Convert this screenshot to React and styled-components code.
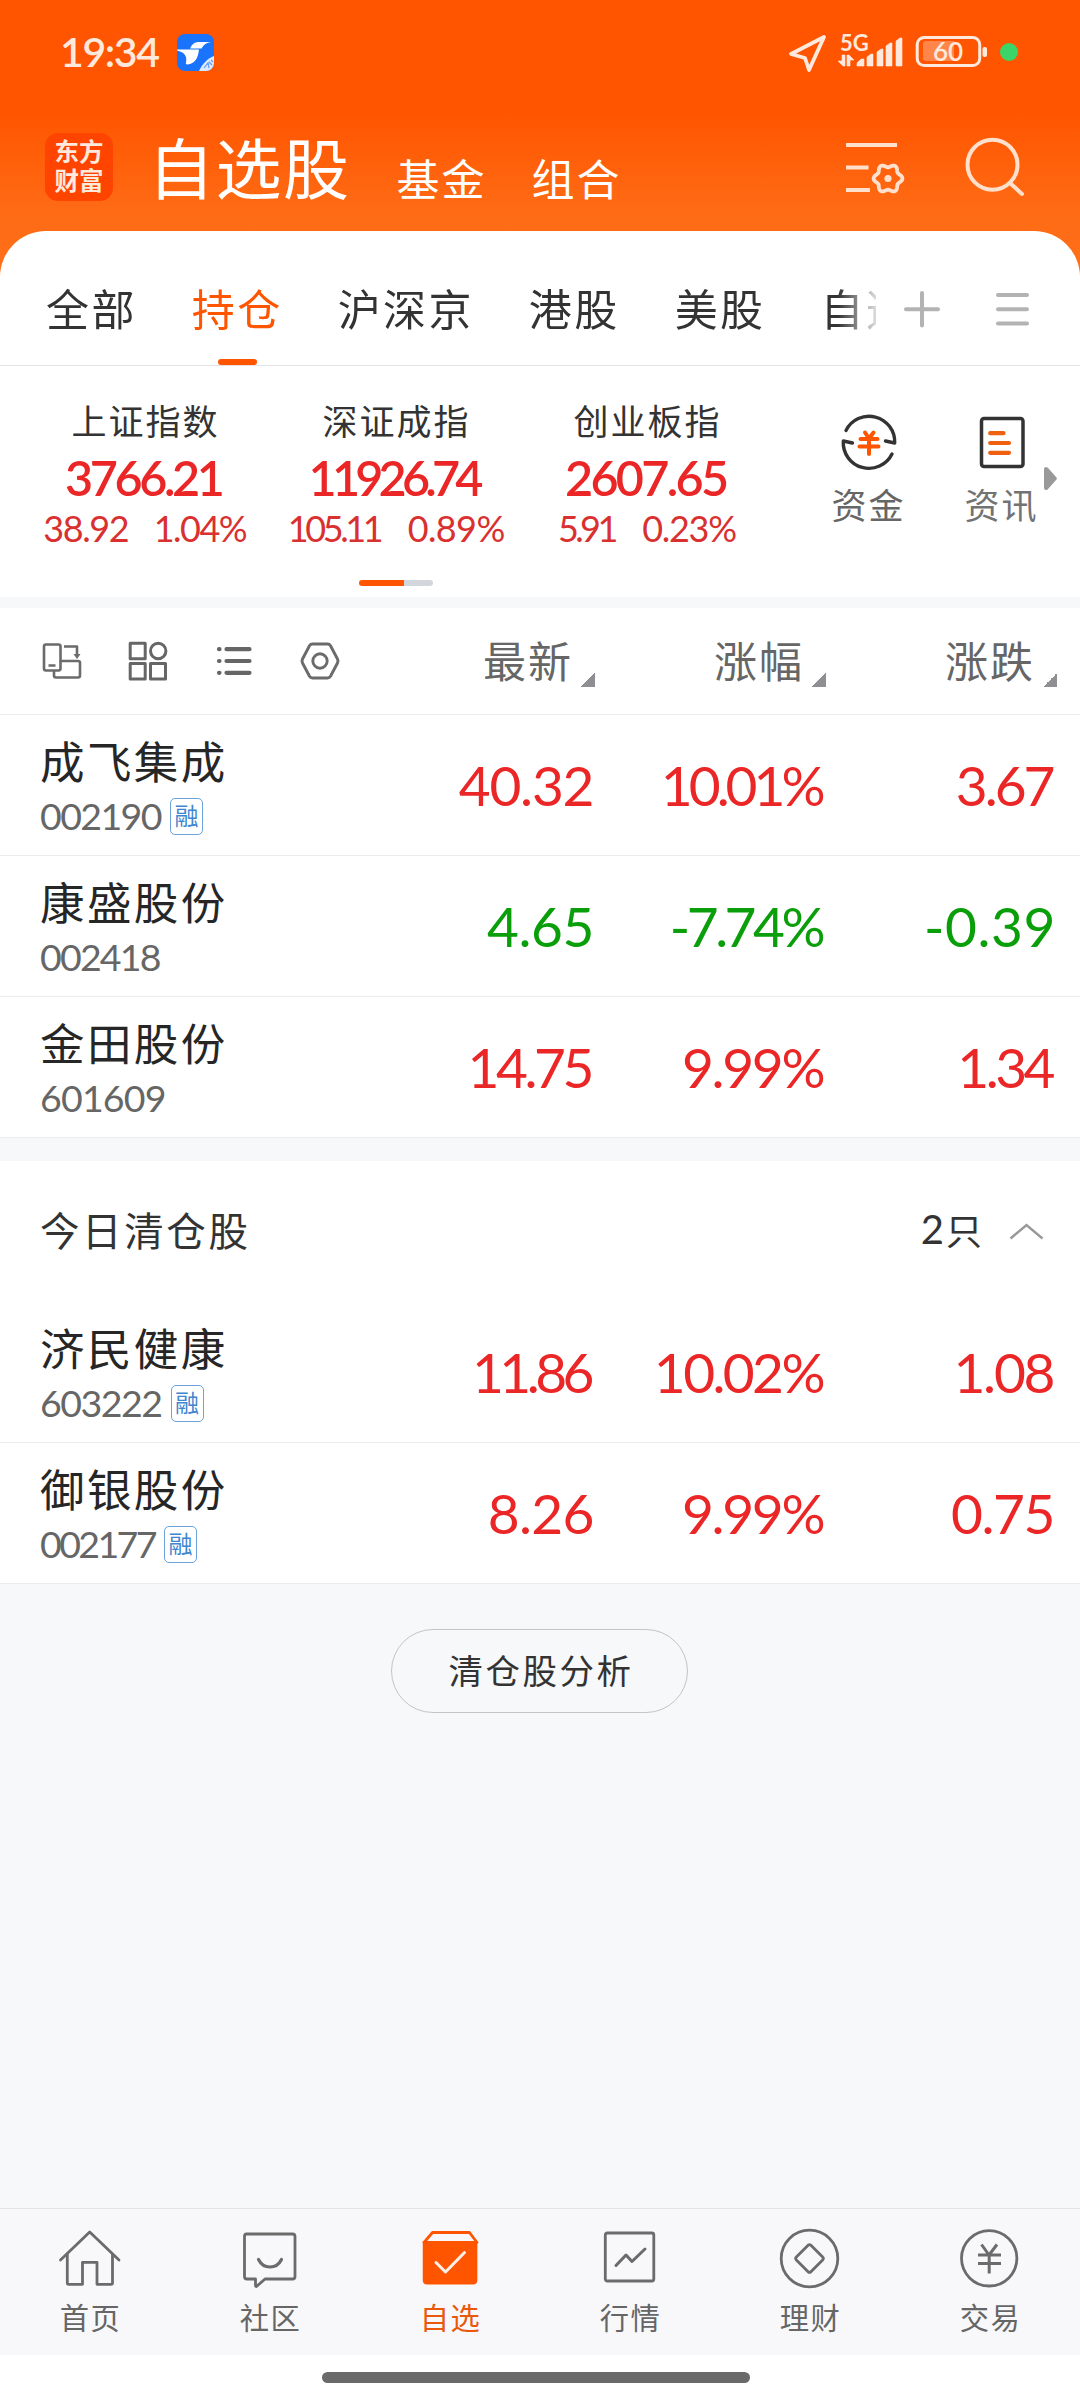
import React from 'react';
import styled, { createGlobalStyle } from 'styled-components';

const CJK = "'Noto Sans CJK SC', 'Noto Sans', sans-serif";
const NUM = "Lato, 'Noto Sans CJK SC', sans-serif";
const ORANGE = '#ff5500';
const RED = '#ea2626';
const GREEN = '#0a9f0a';

const GlobalStyle = createGlobalStyle`
  *, *::before, *::after { box-sizing: border-box; }
  body { margin: 0; background: #fff; font-family: ${CJK}; }
  svg { display: block; overflow: visible; flex: none; }
`;

const Screen = styled.div`
  width: 1080px;
  height: 2400px;
  display: flex;
  flex-direction: column;
  overflow: hidden;
  background: #f7f8fa;
`;

const Hero = styled.div`
  background: linear-gradient(#ff5500 0, #ff5500 112px, #ff6b15 212px, #ff6f1a 280px);
`;

const StatusBar = styled.div`
  height: 106px;
  display: flex;
  align-items: center;
  padding: 0 62px 2px 60px;
`;
const Clock = styled.span`
  font: 600 41px/50px ${NUM};
  letter-spacing: ${(p) => p.$ls}px;
  color: #ffe9dd;
  width: 117px;
  white-space: nowrap;
`;
const StatusIcons = styled.div`
  margin-left: auto;
  padding-top: 2px;
`;

const TitleBar = styled.div`
  height: 125px;
  display: flex;
  align-items: flex-start;
  padding: 27px 54px 0 45px;
`;
const AppLogo = styled.div`
  width: 68px;
  height: 68px;
  border-radius: 13px;
  background: #ff4400;
  color: #ffe9dd;
  display: flex;
  flex-direction: column;
  align-items: center;
  padding-top: 3px;
  font: 700 24.5px/29px ${CJK};
`;
const Title = styled.h1`
  margin: -8px 0 0 35px;
  font: 400 66px/80px ${CJK};
  letter-spacing: 1.5px;
  color: #fff;
`;
const SubTitle = styled.span`
  margin: 17px 0 0 ${(p) => p.$gap}px;
  font: 400 43px/54px ${CJK};
  letter-spacing: 2px;
  color: #fff;
`;
const HeaderIcons = styled.div`
  margin-left: auto;
  padding-top: 3px;
`;

const Sheet = styled.div`
  height: 135px;
  background: #fff;
  border-radius: 46px 46px 0 0;
  border-bottom: 1px solid #e3e3e5;
  display: flex;
`;
const Tabs = styled.div`
  width: 876px;
  display: flex;
  gap: 55px;
  padding: 0 0 0 46px;
  overflow: hidden;
  mask-image: linear-gradient(90deg, #000 838px, transparent 884px);
`;
const Tab = styled.div`
  flex: none;
  display: flex;
  flex-direction: column;
  align-items: center;
  justify-content: space-between;
  padding-top: 48px;
  font: 400 43px/56px ${CJK};
  letter-spacing: 2.4px;
  color: ${(p) => (p.$active ? ORANGE : '#333')};
  &::after {
    content: '';
    width: 39px;
    height: 6px;
    border-radius: 3px;
    background: ${(p) => (p.$active ? ORANGE : 'transparent')};
  }
`;
const TabTools = styled.div`
  display: flex;
  gap: 55px;
  padding: 60px 0 0 28px;
`;

const Indices = styled.section`
  height: 231px;
  display: flex;
  background: #fff;
`;
const IndexPager = styled.div`
  width: 792px;
  display: flex;
  flex-direction: column;
  align-items: center;
`;
const IndexList = styled.div`
  display: flex;
  width: 792px;
  height: 214px;
  padding: 29px 0 0 20px;
`;
const IndexCard = styled.div`
  width: 251px;
  display: flex;
  flex-direction: column;
  align-items: center;
`;
const IndexName = styled.div`
  font: 400 35px/50px ${CJK};
  letter-spacing: 2px;
  margin-right: 0;
  color: #333;
`;
const IndexValue = styled.div`
  margin-top: 7px;
  font: 600 48.5px/50px ${NUM};
  letter-spacing: ${(p) => p.$ls}px;
  padding-right: ${(p) => 1 - p.$ls}px;
  color: ${RED};
`;
const IndexChange = styled.div`
  margin-top: 6px;
  display: flex;
  gap: 24px;
  font: 400 36px/40px ${NUM};
  color: #d93030;
`;
const Spaced = styled.span`
  letter-spacing: ${(p) => p.$ls}px;
  margin-right: ${(p) => -p.$ls}px;
`;
const PageMark = styled.div`
  width: 74px;
  height: 6px;
  border-radius: 3px;
  background: linear-gradient(90deg, ${ORANGE} 45px, #d3d6db 45px);
`;
const Shortcuts = styled.div`
  display: flex;
  padding: 46px 0 0 10px;
`;
const Shortcut = styled.div`
  width: 133px;
  display: flex;
  flex-direction: column;
  align-items: center;
  gap: 7px;
  font: 400 35px/50px ${CJK};
  letter-spacing: 2px;
  color: ${(p) => (p.$fade ? '#737373' : '#666')};
`;
const NextArrow = styled.svg`
  margin: 55px 0 0 -24px;
`;

const Band = styled.div`
  height: ${(p) => p.$h}px;
  background: #f7f8fa;
`;

const TableHead = styled.div`
  height: 107px;
  display: grid;
  grid-template-columns: 359px 236px 231px 231px;
  align-items: center;
  background: #fff;
  border-bottom: 1px solid #ececee;
`;
const ViewIcons = styled.div`
  display: flex;
  gap: 48px;
  padding-left: 43px;
`;
const SortLabel = styled.div`
  display: flex;
  justify-content: flex-end;
  font: 400 43px/56px ${CJK};
  letter-spacing: 2px;
  color: #666;
  margin-top: -4px;
  &::after {
    content: '';
    width: 14px;
    height: 14px;
    margin: 42px 0 0 8px;
    background: linear-gradient(135deg, transparent 50%, #8e8e93 50%);
  }
`;

const StockRow = styled.div`
  height: 141px;
  display: grid;
  grid-template-columns: 340px 256px 231px 230px;
  align-items: center;
  background: #fff;
  border-bottom: 1px solid #ececee;
`;
const StockInfo = styled.div`
  padding: 3px 0 0 40px;
`;
const StockName = styled.div`
  font: 400 44.5px/56px ${CJK};
  letter-spacing: 2.4px;
  color: #262626;
`;
const StockMeta = styled.div`
  height: 50px;
  margin-top: 3px;
  display: flex;
  align-items: center;
  gap: 9px;
`;
const StockCode = styled.span`
  font: 400 37.5px/46px ${NUM};
  letter-spacing: ${(p) => p.$ls}px;
  color: #666;
`;
const MarginBadge = styled.span`
  width: 33px;
  height: 37px;
  border: 1.5px solid #6ba3da;
  border-radius: 5px;
  font: 400 24px/32px ${CJK};
  text-align: center;
  color: #3f86cf;
`;
const Figure = styled.div`
  text-align: right;
  font: 400 55px/66px ${NUM};
  letter-spacing: ${(p) => p.$ls}px;
  padding-right: ${(p) => Math.max(0, 1.5 - p.$ls)}px;
  color: ${(p) => (p.$down ? GREEN : RED)};
`;

const ClearedHead = styled.div`
  height: 141px;
  display: flex;
  align-items: center;
  padding: 0 37px 6px 40px;
  background: #fff;
  font: 400 39.5px/56px ${CJK};
  letter-spacing: 2.6px;
  color: #333;
`;
const ClearedCount = styled.div`
  margin-left: auto;
  display: flex;
  align-items: center;
  font-size: 36px;
  letter-spacing: 2px;
`;
const CountNumber = styled.span`
  font: 400 40px/56px ${NUM};
`;
const Chevron = styled.svg`
  margin: 5px 0 0 26px;
`;

const Footer = styled.div`
  flex: 1;
  display: flex;
  justify-content: center;
  align-items: flex-start;
  padding: 45px 1px 0 0;
`;
const AnalyseButton = styled.button`
  width: 297px;
  height: 84px;
  padding: 0 0 4px 3px;
  border: 1px solid #c4c4c6;
  border-radius: 42px;
  background: transparent;
  font: 400 34.5px/50px ${CJK};
  letter-spacing: 2.5px;
  color: #333;
`;

const NavBar = styled.nav`
  height: 147px;
  display: flex;
  border-top: 1px solid #e3e3e5;
  background: #f8f8fb;
`;
const NavItem = styled.div`
  width: 180px;
  display: flex;
  flex-direction: column;
  align-items: center;
  padding-top: 19px;
  gap: 7px;
  font: 400 29.3px/42px ${CJK};
  letter-spacing: 1.5px;
  color: ${(p) => (p.$active ? '#e8590c' : '#666')};
`;
const NavText = styled.span`
  margin-right: -1px;
`;
const HomeArea = styled.div`
  height: 45px;
  padding: 17px 0 0 322px;
  background: #fff;
`;
const HomeHandle = styled.div`
  width: 428px;
  height: 11px;
  border-radius: 6px;
  background: #6a6a6a;
`;

const gearPath =
  'M' +
  Array.from({ length: 120 }, (_, i) => {
    const t = (i / 120) * Math.PI * 2;
    const r = 12.8 + 1.6 * Math.cos(6 * t);
    return `${(r * Math.cos(t)).toFixed(2)} ${(r * Math.sin(t)).toFixed(2)}`;
  }).join('L') +
  'Z';

const WingIcon = () => (
  <svg width="37" height="37" viewBox="0 0 37 37">
    <rect width="37" height="37" rx="8" fill="#1a73fb" />
    <path d="M13 14.500c2-4.500 5-6.500 9-6.500h12c-6 1-7.500 3.500-9.500 6.500zM0 15.500h22c-1 9-4 14-11.500 15-1.500 0-2-1-1.500-2 1-5 0-10-9-12z" fill="#fff" />
    <path d="M37 22c-6 2-12 8-15 15h7a8 8 0 0 0 8-8z" fill="#dceafd" />
    <path d="M27 34l4-5 1 5M32 28l3 3M34 26l2 2" fill="none" stroke="#5c9bf7" strokeWidth="1.2" />
  </svg>
);

const StatusGlyphs = () => (
  <svg width="229" height="38" viewBox="789 34 229 38" fill="#ffe9dd">
    <path d="M824 37L791 54l14 4 4 12z" fill="none" stroke="#ffe9dd" strokeWidth="3.8" strokeLinejoin="round" />
    <text x="840" y="50.500" fontFamily="Lato" fontWeight="700" fontSize="22">5G</text>
    <path d="M842 55h3v11h-2l-5-5h4zM847 66V55h2l5 5h-4v6zM857 66v-3l4-4h3v7zM867 66v-9l4-3h2v12zM877 66V52l4-3h2v17zM886 66V46l4-3h2v23zM896 66V41l4-3h2v28z" stroke="#ffe9dd" strokeWidth=".6" strokeLinejoin="round" />
    <rect x="917.200" y="37.500" width="62.500" height="28" rx="7" fill="none" stroke="#ffe9dd" strokeWidth="3" />
    <path d="M926 41h28v20h-28a3 3 0 0 1-3-3V44a3 3 0 0 1 3-3z" fill="#ff8648" />
    <text x="948" y="61" fontFamily="Lato" fontWeight="600" fontSize="26" textAnchor="middle">60</text>
    <rect x="982.500" y="47" width="4.500" height="10" rx="2" />
    <circle cx="1009" cy="52" r="9" fill="#3bd468" />
  </svg>
);

const HeaderGlyphs = () => (
  <svg width="180" height="60" viewBox="846 136 180 60" fill="none" stroke="#ffe0cd" strokeWidth="4">
    <path d="M846 145h51M846 167.500h22.500M846 190h24" />
    <g transform="translate(888 178.500)">
      <path d={gearPath} strokeWidth="3.800" strokeLinejoin="round" />
      <circle r="3.600" fill="#ffe0cd" stroke="none" />
    </g>
    <circle cx="992.500" cy="164.700" r="25" />
    <path d="M1010 183l12 11" strokeLinecap="round" />
  </svg>
);

const viewIcons = [
  <svg key="rotate" width="38" height="38" viewBox="0 0 38 38" fill="none" stroke="#6b6b6b" strokeWidth="2.6" strokeLinejoin="round">
    <rect x="1" y="2.500" width="16.500" height="26" rx="2" />
    <path d="M17.500 19H35a2 2 0 0 1 2 2v12.500a2 2 0 0 1-2 2H13a2 2 0 0 1-2-2v-5M5.500 23.500h7M21 4.500h13V13" />
    <path d="M30.500 12h7L34 17z" fill="#6b6b6b" stroke="none" />
  </svg>,
  <svg key="grid" width="38" height="38" viewBox="0 0 38 38" fill="none" stroke="#666" strokeWidth="3" strokeLinejoin="round">
    <rect x="1.200" y="1.200" width="15" height="15.500" />
    <circle cx="29.200" cy="9" r="7.700" />
    <rect x="1.200" y="21.500" width="15" height="15.500" />
    <rect x="21.500" y="21.500" width="15" height="15.500" />
  </svg>,
  <svg key="list" width="38" height="38" viewBox="0 0 38 38" fill="none" stroke="#666" strokeWidth="4.200" strokeLinecap="round">
    <path d="M11.500 7.200h23M11.500 19h23M11.500 30.800h23M4 7.200h.5M4 19h.5M4 30.800h.5" />
  </svg>,
  <svg key="hex" width="38" height="38" viewBox="0 0 38 38" fill="none" stroke="#6b6b6b" strokeWidth="2.900" strokeLinejoin="round">
    <path d="M11.500 2h15q2 0 3 1.700l7 13.300q1 2 0 4l-7 13.300q-1 1.700-3 1.700h-15q-2 0-3-1.700l-7-13.300q-1-2 0-4l7-13.300q1-1.700 3-1.700z" />
    <circle cx="19" cy="19" r="7.200" />
  </svg>,
];

const FundIcon = () => (
  <svg width="60" height="60" viewBox="-30 -30 60 60" fill="none" stroke="#333" strokeWidth="3.400" strokeLinecap="round" strokeLinejoin="round">
    <path d="M-23-11.500A25.700 25.700 0 0 1 25.700 1L16.500-1M23 12A25.700 25.700 0 0 1-25.700-1L-16.500 1" />
    <path d="M-4-9.500L0-3.500L4.500-9.500M-8.500-3H8.500M-9.500 4.500H9.500M0-3V12" stroke={ORANGE} strokeWidth="4" />
  </svg>
);
const NewsIcon = () => (
  <svg width="60" height="60" viewBox="-30 -30 60 60" fill="none" stroke="#333" strokeWidth="3.500" strokeLinecap="round">
    <rect x="-20.500" y="-23.500" width="41.500" height="48" rx="2.500" />
    <path d="M-11.800-8.800H1.500M-11.800 1H7M-11.800 10.800H7" stroke="#f06011" strokeWidth="4.200" />
  </svg>
);

const navIcons = {
  home: (
    <>
      <path d="M.5 32L29.700 4L59 32" strokeLinecap="round" />
      <path d="M7.300 26v29q0 1.300 1.500 1.300H22.500v-22H37v22H51q1.500 0 1.500-1.300V26" />
    </>
  ),
  chat: (
    <>
      <path d="M6.500 6h46q2.500 0 2.500 2.500v40q0 2.500-2.500 2.500H25l-8.500 7.500q-1 0-1-1V51H7q-2.500 0-2.500-2.500V8.500Q4.500 6 6.500 6z" />
      <path d="M18.500 31.500c5 10 18 10 23 0" strokeLinecap="round" strokeWidth="3.200" />
    </>
  ),
  box: (
    <>
      <path d="M2 13h56v39q0 4.500-4.500 4.500h-47Q2 56.500 2 52z" transform="translate(.8 0) scale(.975 1)" fill={ORANGE} stroke="none" />
      <path d="M4 14.500L12.500 4.500h37L57 14.500z" stroke={ORANGE} />
      <path d="M16 34.500L25.500 44L44.500 24.500" stroke="#fff0e8" strokeWidth="3" strokeLinecap="round" />
    </>
  ),
  chart: (
    <>
      <rect x="5.300" y="5" width="48.500" height="48" rx="2" />
      <path d="M16 37.500L26 27L32 33.500L45 21" strokeWidth="3" strokeLinecap="round" />
    </>
  ),
  wealth: (
    <>
      <circle cx="29.500" cy="30.500" r="28.300" />
      <rect x="19.200" y="20.200" width="20.600" height="20.600" rx="2" transform="rotate(45 29.500 30.500)" />
    </>
  ),
  trade: (
    <>
      <circle cx="29.200" cy="30.300" r="27.700" />
      <path d="M21.500 16.500L29 27L37 16.500M18 27H41M18 35.500H41M29.200 27V45.500" strokeWidth="3" />
    </>
  ),
};

const indices = [
  { name: '上证指数', value: ['3766.21', -3.4], diff: ['38.92', -1.4], pct: ['1.04%', -1.5] },
  { name: '深证成指', value: ['11926.74', -4.8], diff: ['105.11', -3.4], pct: ['0.89%', -0.6] },
  { name: '创业板指', value: ['2607.65', -2.7], diff: ['5.91', -3.6], pct: ['0.23%', -1.3] },
];

const holdings = [
  { name: '成飞集成', code: '002190', cls: -1.6, badge: true, price: ['40.32', -1.2], pct: ['10.01%', -4], diff: ['3.67', -3] },
  { name: '康盛股份', code: '002418', cls: -1.8, price: ['4.65', -0.4], pct: ['-7.74%', -3.5], diff: ['-0.39', 0.6] },
  { name: '金田股份', code: '601609', cls: -0.8, price: ['14.75', -3.4], pct: ['9.99%', -2.3], diff: ['1.34', -3.5] },
];
const cleared = [
  { name: '济民健康', code: '603222', cls: -1.5, badge: true, price: ['11.86', -4.5], pct: ['10.02%', -2.6], diff: ['1.08', -2.2] },
  { name: '御银股份', code: '002177', cls: -2.6, badge: true, price: ['8.26', -0.6], pct: ['9.99%', -2.3], diff: ['0.75', -1.4] },
];

const Stock = ({ s }) => (
  <StockRow>
    <StockInfo>
      <StockName>{s.name}</StockName>
      <StockMeta>
        <StockCode $ls={s.cls}>{s.code}</StockCode>
        {s.badge && <MarginBadge>融</MarginBadge>}
      </StockMeta>
    </StockInfo>
    {[s.price, s.pct, s.diff].map(([text, ls], i) => (
      <Figure key={i} $ls={ls} $down={s.pct[0].startsWith('-')}>{text}</Figure>
    ))}
  </StockRow>
);

const nav = [
  ['首页', 'home'],
  ['社区', 'chat'],
  ['自选', 'box'],
  ['行情', 'chart'],
  ['理财', 'wealth'],
  ['交易', 'trade'],
];

export default function App() {
  return (
    <Screen>
      <GlobalStyle />
      <Hero>
        <StatusBar>
          <Clock $ls={-1.4}>19:34</Clock>
          <WingIcon />
          <StatusIcons><StatusGlyphs /></StatusIcons>
        </StatusBar>
        <TitleBar>
          <AppLogo><span>东方</span><span>财富</span></AppLogo>
          <Title>自选股</Title>
          <SubTitle $gap={46}>基金</SubTitle>
          <SubTitle $gap={45}>组合</SubTitle>
          <HeaderIcons><HeaderGlyphs /></HeaderIcons>
        </TitleBar>
        <Sheet>
          <Tabs>
            {['全部', '持仓', '沪深京', '港股', '美股', '自选'].map((t) => (
              <Tab key={t} $active={t === '持仓'}>{t}</Tab>
            ))}
          </Tabs>
          <TabTools>
            <svg width="36" height="36" viewBox="0 0 36 36" stroke="#b3b3b3" strokeWidth="4" strokeLinecap="round">
              <path d="M18 2v32.500M2 18.200h32" />
            </svg>
            <svg width="36" height="36" viewBox="0 0 36 36" stroke="#b3b3b3" strokeWidth="4" strokeLinecap="round">
              <path d="M3 4h29M3 18.200h29M3 32.500h29" />
            </svg>
          </TabTools>
        </Sheet>
      </Hero>

      <Indices>
        <IndexPager>
          <IndexList>
            {indices.map((x) => (
              <IndexCard key={x.name}>
                <IndexName>{x.name}</IndexName>
                <IndexValue $ls={x.value[1]}>{x.value[0]}</IndexValue>
                <IndexChange>
                  <Spaced $ls={x.diff[1]}>{x.diff[0]}</Spaced>
                  <Spaced $ls={x.pct[1]}>{x.pct[0]}</Spaced>
                </IndexChange>
              </IndexCard>
            ))}
          </IndexList>
          <PageMark />
        </IndexPager>
        <Shortcuts>
          <Shortcut><FundIcon />资金</Shortcut>
          <Shortcut $fade><NewsIcon />资讯</Shortcut>
          <NextArrow width="13" height="23" viewBox="0 0 13 23" fill="#999">
            <path d="M0 2Q0 0 2 0Q3.500 0 4.500 1.500L12.500 10.500Q13.200 11.500 12.500 12.500L4.500 21.500Q3.500 23 2 23Q0 23 0 21z" />
          </NextArrow>
        </Shortcuts>
      </Indices>

      <Band $h={11} />

      <TableHead>
        <ViewIcons>{viewIcons}</ViewIcons>
        <SortLabel>最新</SortLabel>
        <SortLabel>涨幅</SortLabel>
        <SortLabel>涨跌</SortLabel>
      </TableHead>
      {holdings.map((s) => <Stock key={s.code} s={s} />)}

      <Band $h={23} />

      <ClearedHead>
        今日清仓股
        <ClearedCount>
          <CountNumber>2</CountNumber>只
          <Chevron width="33" height="15" viewBox="0 0 33 15" fill="none" stroke="#999" strokeWidth="2.400">
            <path d="M.5 14.500L16.500 1L32.500 14.500" />
          </Chevron>
        </ClearedCount>
      </ClearedHead>
      {cleared.map((s) => <Stock key={s.code} s={s} />)}

      <Footer>
        <AnalyseButton>清仓股分析</AnalyseButton>
      </Footer>

      <NavBar>
        {nav.map(([label, icon]) => (
          <NavItem key={icon} $active={icon === 'box'}>
            <svg width="60" height="60" viewBox="0 0 60 60" fill="none" stroke="#6b6b6b" strokeWidth="2.800" strokeLinejoin="round">
              {navIcons[icon]}
            </svg>
            <NavText>{label}</NavText>
          </NavItem>
        ))}
      </NavBar>
      <HomeArea><HomeHandle /></HomeArea>
    </Screen>
  );
}
